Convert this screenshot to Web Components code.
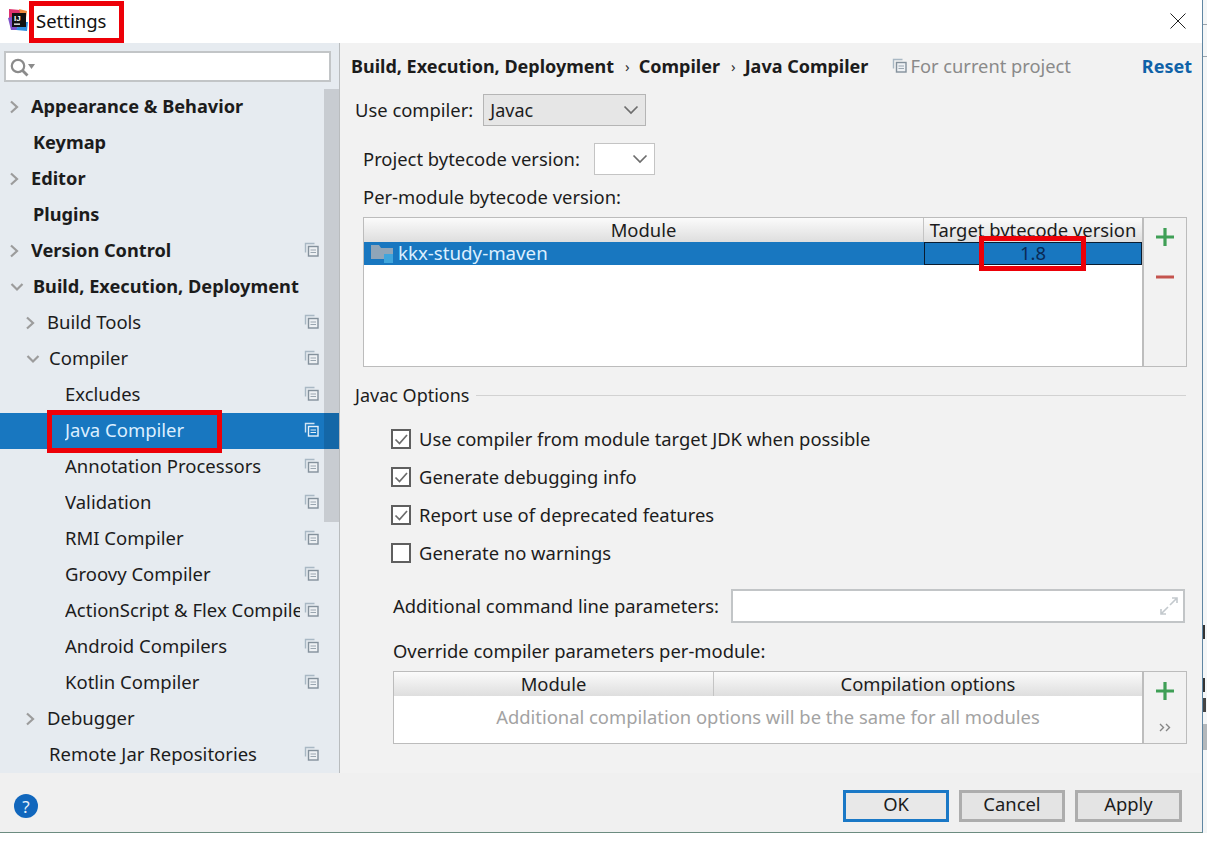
<!DOCTYPE html>
<html lang="en">
<head>
<meta charset="utf-8">
<title>Settings</title>
<style>
  html, body { margin: 0; padding: 0; background: #fff; }
  body { font-family: "Noto Sans", "Open Sans", sans-serif; color: #1c1c1c; }
</style>
</head>
<body>
<settings-page></settings-page>

<script>
  const COPY_ICON = `<svg width="15" height="15" viewBox="0 0 15 15" fill="none">
    <path d="M1.5 10.5v-9h9" stroke="var(--copy-back, #a9b8c4)" stroke-width="1.4"/>
    <rect x="4.5" y="4.5" width="9.5" height="9.5" stroke="var(--copy-front, #84919c)" stroke-width="1.4" fill="var(--copy-fill, #eef1f4)"/>
    <path d="M6.5 8h5.5M6.5 10.5h5.5" stroke="var(--copy-front, #9aa6b0)" stroke-width="1.2"/>
  </svg>`;

  function define(name, css, html, setup) {
    customElements.define(name, class extends HTMLElement {
      constructor() {
        super();
        const root = this.attachShadow({ mode: "open" });
        const content = typeof html === "function" ? html(this) : html;
        root.innerHTML = `<style>${css}</style>${content}`;
      }
      connectedCallback() {
        if (setup) setup(this, this.shadowRoot);
      }
    });
  }

  define("copy-icon", ":host{display:inline-flex;width:15px;height:15px}", COPY_ICON);

  define("tree-row", `
    :host {
      display: flex; align-items: center; height: 36px; box-sizing: border-box;
      padding-right: 20px; font-size: 18.5px; color: #1c1c1c; white-space: nowrap;
    }
    :host([bold]) { font-weight: 700; font-size: 18.2px; }
    :host([selected]) {
      background: #1877c0; color: #dcefff;
      --copy-back: #cfe3f2; --copy-front: #e6f1f9; --copy-fill: #1877c0;
    }
    .arrow { width: 24px; flex: none; display: flex; align-items: center; }
    .arrow svg { margin-left: 1px; }
    .label { flex: 1; min-width: 0; overflow: hidden; margin-top: -3px; }
    copy-icon { margin: -3px 0 0 4px; flex: none; }
  `, el => `
    ${el.hasAttribute("arrow") ? `<span class="arrow">${el.getAttribute("arrow") === "down"
      ? `<svg width="14" height="14" viewBox="0 0 14 14" fill="none"><path d="M1.5 4l5.5 5.5L12.5 4" stroke="#9c9c9c" stroke-width="2.2"/></svg>`
      : `<svg width="14" height="14" viewBox="0 0 14 14" fill="none"><path d="M3 1.5L9 7l-6 5.5" stroke="#9c9c9c" stroke-width="2.2"/></svg>`}</span>` : ""}
    <span class="label"><slot></slot></span>
    ${el.hasAttribute("copy") ? "<copy-icon></copy-icon>" : ""}
  `, el => {
    const x = +el.getAttribute("x");
    el.style.paddingLeft = (el.hasAttribute("arrow") ? x - 24 : x) + "px";
  });

  define("search-box", `
    :host {
      display: flex; align-items: center; box-sizing: border-box; height: 31px;
      margin: 8px 8px 7px 4px; background: #fff; border: 2px solid #c2c5c7; padding-left: 4px;
    }
  `, `<svg width="26" height="20" viewBox="0 0 26 20" fill="none">
    <circle cx="8" cy="9" r="6.2" stroke="#8b8b8b" stroke-width="2.2"/>
    <path d="M12.5 13.5l5 5" stroke="#8b8b8b" stroke-width="2.8"/>
    <path d="M18 7h7l-3.5 5z" fill="#8b8b8b"/>
  </svg>`);

  define("combo-box", `
    :host {
      display: inline-flex; align-items: center; justify-content: space-between; box-sizing: border-box;
      height: 32px; padding: 0 6px 0 6px; border: 1px solid #b5b5b5; background: #e6e6e6;
      font-size: 18px; color: #1c1c1c;
    }
    :host([plain]) { background: #fff; border-color: #c4c4c4; }
  `, `<span><slot></slot></span>
    <svg width="16" height="10" viewBox="0 0 16 10" fill="none"><path d="M1.5 1.5L8 8l6.5-6.5" stroke="#6d6d6d" stroke-width="1.7"/></svg>`);

  define("check-row", `
    :host { display: flex; align-items: center; height: 38px; padding-left: 51px; font-size: 18.4px; }
    .box {
      width: 20px; height: 20px; box-sizing: border-box; border: 2px solid #5f5f5f; background: #fff;
      margin-right: 8px; display: flex; align-items: center; justify-content: center;
    }
    span { margin-top: -2px; }
  `, el => `<div class="box">${el.hasAttribute("checked")
    ? `<svg width="14" height="14" viewBox="0 0 14 14" fill="none"><path d="M1.5 7.5l4 4L13 3" stroke="#6c6c6c" stroke-width="1.7"/></svg>` : ""}</div>
    <span><slot></slot></span>`);

  define("data-table", `
    :host { display: flex; box-sizing: border-box; border: 1px solid #bcbcbc; font-size: 18.4px; }
    .grid { flex: 1; min-width: 0; background: #fff; display: flex; flex-direction: column; }
    .head { display: flex; height: 24px; flex: none; background: linear-gradient(#fbfbfb, #dedede); }
    .head span {
      box-sizing: border-box; text-align: center; line-height: 24px; white-space: nowrap;
      overflow: hidden; border-left: 1px solid #c4c4c4;
    }
    .head span:first-child { border-left: 0; }
    .tools {
      width: 44px; flex: none; box-sizing: border-box; border-left: 2px solid #bdbdbd; background: #f2f2f2;
      display: flex; flex-direction: column; align-items: center;
    }
  `, el => {
    const cols = el.getAttribute("cols").split("|").map(c => c.split(":"));
    return `<div class="grid">
      <div class="head">${cols.map(c => `<span style="width:${c[1]}px">${c[0]}</span>`).join("")}</div>
      <slot></slot>
    </div>
    <div class="tools"><slot name="tools"></slot></div>`;
  });

  define("module-row", `
    :host {
      display: flex; height: 23px; background: #1877c0; color: #dcefff; font-size: 18.7px;
    }
    .name { width: 559px; flex: none; box-sizing: border-box; display: flex; align-items: center; padding-left: 6px; gap: 4px; }
    .name span { margin-top: -2px; }
    .cell {
      width: 218px; flex: none; box-sizing: border-box; border: 1px solid #0a1c30; margin-left: 1px;
      background: #1877c0; color: #0a2a55; text-align: center; line-height: 20px; font-size: 18.4px;
    }
  `, el => `<div class="name">
      <svg width="24" height="20" viewBox="0 0 24 20"><path d="M1 1h8l2 3h12v11H1z" fill="#8fa5b8"/><rect x="14" y="10" width="9" height="9" fill="#3fa5dc"/></svg>
      <span><slot></slot></span>
    </div>
    <div class="cell">${el.getAttribute("target")}</div>`);

  define("tool-plus", ":host{display:block}", `<svg width="20" height="20" viewBox="0 0 20 20"><path d="M10 1v18M1 10h18" stroke="#3f9f56" stroke-width="3.2"/></svg>`);
  define("tool-minus", ":host{display:block}", `<svg width="20" height="4" viewBox="0 0 20 4"><path d="M1 2h18" stroke="#c4544e" stroke-width="3"/></svg>`);
  define("tool-more", ":host{display:block}", `<svg width="12" height="9" viewBox="0 0 12 9" fill="none"><path d="M1 1l3.5 3.5L1 8M7 1l3.5 3.5L7 8" stroke="#868686" stroke-width="1.4"/></svg>`);

  define("dlg-button", `
    :host {
      display: inline-flex; align-items: center; justify-content: center; box-sizing: border-box;
      height: 32px; border: 3px solid #adadad; background: #e4e4e4; font-size: 18.4px; color: #1c1c1c;
      padding-bottom: 5px;
    }
    :host([primary]) { border-color: #1a78c6; background: #e8e8e8; }
  `, `<slot></slot>`);

  define("red-mark", `
    :host { position: absolute; box-sizing: border-box; border: 5px solid #ed0008; pointer-events: none; }
  `, "");

  define("title-bar", `
    :host { display: flex; align-items: center; height: 43px; background: #fff; padding-left: 8px; box-sizing: border-box; font-size: 18.5px; color: #111; }
    .name { margin-left: 7px; flex: 1; margin-top: -3px; }
    .close { margin-right: 16px; width: 16px; height: 16px; margin-top: -2px; }
  `, `<svg width="21" height="26" viewBox="0 0 21 26" style="margin-top:-1px">
      <path d="M1 1l11 1 2 6-9 7-4-5z" fill="#e0336e"/>
      <path d="M0 10l7-2 3 14-7 0z" fill="#7f52c8"/>
      <path d="M12 14l8 0-1 9-11-1z" fill="#2f8fe0"/>
      <path d="M11 1l8 2-1 7-5-1z" fill="#f08a3c"/>
      <rect x="4" y="5" width="14" height="14" fill="#111"/>
      <text x="6" y="13" font-family="Liberation Sans, sans-serif" font-size="8" font-weight="700" fill="#fff">IJ</text>
      <rect x="6" y="15.5" width="6" height="1.3" fill="#fff"/>
    </svg>
    <span class="name"><slot></slot></span>
    <svg class="close" viewBox="0 0 16 16" fill="none"><path d="M.5.5l15 15M15.5.5l-15 15" stroke="#222" stroke-width="1"/></svg>`);

  define("settings-sidebar", `
    :host { display: block; width: 339px; flex: none; background: #e6ebf0; position: relative; overflow: hidden; border-right: 1px solid #b9bcbe; box-sizing: content-box; }
    .thumb { position: absolute; left: 324px; top: 46px; width: 15px; height: 433px; background: rgba(0,0,0,.13); }
  `, `
    <search-box></search-box>
    <tree-row x="31" arrow="right" bold>Appearance &amp; Behavior</tree-row>
    <tree-row x="33" bold>Keymap</tree-row>
    <tree-row x="31" arrow="right" bold>Editor</tree-row>
    <tree-row x="33" bold>Plugins</tree-row>
    <tree-row x="31" arrow="right" bold copy>Version Control</tree-row>
    <tree-row x="33" arrow="down" bold>Build, Execution, Deployment</tree-row>
    <tree-row x="47" arrow="right" copy>Build Tools</tree-row>
    <tree-row x="49" arrow="down" copy>Compiler</tree-row>
    <tree-row x="65" copy>Excludes</tree-row>
    <tree-row x="65" copy selected>Java Compiler</tree-row>
    <tree-row x="65" copy>Annotation Processors</tree-row>
    <tree-row x="65" copy>Validation</tree-row>
    <tree-row x="65" copy>RMI Compiler</tree-row>
    <tree-row x="65" copy>Groovy Compiler</tree-row>
    <tree-row x="65" copy>ActionScript &amp; Flex Compiler</tree-row>
    <tree-row x="65" copy>Android Compilers</tree-row>
    <tree-row x="65" copy>Kotlin Compiler</tree-row>
    <tree-row x="47" arrow="right">Debugger</tree-row>
    <tree-row x="49" copy>Remote Jar Repositories</tree-row>
    <div class="thumb"></div>
  `);

  define("compiler-form", `
    :host { display: block; flex: 1; min-width: 0; background: #f2f2f2; font-size: 18.4px; white-space: nowrap; overflow: hidden; }
    .crumbs { display: flex; align-items: center; height: 45px; padding: 0 10px 0 11px; font-size: 18px; }
    .crumbs b { font-weight: 700; }
    .crumbs i { font-style: normal; margin: 0 9px 0 11px; font-size: 15px; color: #333; }
    .scope { display: flex; align-items: center; gap: 3px; margin-left: 24px; color: #8a8a8a; flex: 1; font-size: 18.3px; }
    .reset { color: #0f62a8; font-weight: 700; }
    .line { display: flex; align-items: center; }
    .line > span { margin-top: -2px; }
    .use { margin: 6px 0 0 15px; }
    .use combo-box { width: 163px; margin-left: 10px; }
    .bytecode { margin: 17px 0 0 23px; }
    .bytecode combo-box { width: 61px; margin-left: 14px; justify-content: flex-end; }
    .per { margin: 10px 0 0 23px; height: 24px; line-height: 24px; }
    .t1 { margin: 8px 15px 0 23px; height: 150px; }
    .javac { margin: 16px 16px 0 15px; height: 24px; font-size: 18px; }
    .javac::after { content: ""; flex: 1; height: 1px; background: #d2d2d2; margin-left: 7px; }
    .checks { margin-top: 13px; }
    .extra { margin: 17px 17px 0 53px; height: 34px; }
    .extra .input {
      flex: 1; height: 34px; box-sizing: border-box; margin-left: 12px; background: #fff; border: 2px solid #c2c5c7;
      display: flex; align-items: center; justify-content: flex-end; padding-right: 4px;
    }
    .over { margin: 16px 0 0 53px; height: 24px; line-height: 24px; }
    .t2 { margin: 8px 15px 0 53px; height: 73px; }
    .hint { text-align: center; color: #a3a3a3; line-height: 44px; margin-top: -1px; }
    tool-more { margin-top: auto; margin-bottom: 6px; }
    tool-plus { margin-top: 9px; }
    tool-minus { margin-top: 7px; }
  `, `
    <div class="crumbs">
      <b>Build, Execution, Deployment</b><i>&#8250;</i><b>Compiler</b><i>&#8250;</i><b>Java Compiler</b>
      <span class="scope"><copy-icon></copy-icon>For current project</span>
      <span class="reset">Reset</span>
    </div>
    <div class="line use"><span>Use compiler:</span><combo-box>Javac</combo-box></div>
    <div class="line bytecode"><span>Project bytecode version:</span><combo-box plain></combo-box></div>
    <div class="per">Per-module bytecode version:</div>
    <data-table class="t1" cols="Module:559|Target bytecode version:219">
      <module-row target="1.8">kkx-study-maven</module-row>
      <tool-plus slot="tools"></tool-plus>
      <tool-minus slot="tools"></tool-minus>
    </data-table>
    <div class="line javac">Javac Options</div>
    <div class="checks">
      <check-row checked>Use compiler from module target JDK when possible</check-row>
      <check-row checked>Generate debugging info</check-row>
      <check-row checked>Report use of deprecated features</check-row>
      <check-row>Generate no warnings</check-row>
    </div>
    <div class="line extra"><span>Additional command line parameters:</span>
      <div class="input"><svg width="20" height="20" viewBox="0 0 20 20" fill="none">
        <path d="M11 9l7-7M13 2h5v5" stroke="#c3c9cd" stroke-width="1.6"/>
        <path d="M9 11l-7 7M2 13v5h5" stroke="#c3c9cd" stroke-width="1.6"/>
      </svg></div>
    </div>
    <div class="over">Override compiler parameters per-module:</div>
    <data-table class="t2" cols="Module:319|Compilation options:429">
      <div class="hint">Additional compilation options will be the same for all modules</div>
      <tool-plus slot="tools"></tool-plus>
      <tool-more slot="tools"></tool-more>
    </data-table>
  `);

  define("dialog-footer", `
    :host { display: flex; align-items: center; height: 59px; background: #f0f0f0; box-sizing: border-box; padding: 7px 20px 0 14px; }
    .help {
      width: 24px; height: 24px; border-radius: 50%; background: #1167bd; color: #e8f2fb; font-size: 17px;
      display: flex; align-items: center; justify-content: center; margin-right: auto;
    }
    dlg-button { width: 106px; margin-left: 10px; }
    dlg-button:last-child { width: 107px; }
  `, `
    <div class="help">?</div>
    <dlg-button primary>OK</dlg-button>
    <dlg-button>Cancel</dlg-button>
    <dlg-button>Apply</dlg-button>
  `);

  define("settings-page", `
    :host { display: flex; width: 1207px; height: 841px; overflow: hidden; background: #fff; }
    .window {
      width: 1203px; height: 833px; flex: none; box-sizing: border-box; position: relative; display: flex; flex-direction: column;
      border-right: 1px solid #5f86a3; border-bottom: 1px solid #6c8c80; background: #f2f2f2;
    }
    .main { display: flex; height: 730px; flex: none; }
    .behind {
      flex: 1; height: 833px;
      background:
        linear-gradient(#333, #333) 0 625px / 2px 14px no-repeat,
        linear-gradient(#333, #333) 0 678px / 2px 14px no-repeat,
        linear-gradient(#444, #444) 0 698px / 3px 14px no-repeat,
        linear-gradient(#b4b8bb, #b4b8bb) 0 724px / 4px 26px no-repeat,
        linear-gradient(#9aa4ac, #9aa4ac) 0 24px / 4px 1px no-repeat,
        linear-gradient(#9aa4ac, #9aa4ac) 0 56px / 4px 1px no-repeat,
        #f4f6f7;
    }
  `, `
    <div class="window">
      <title-bar>Settings</title-bar>
      <div class="main">
        <settings-sidebar></settings-sidebar>
        <compiler-form></compiler-form>
      </div>
      <dialog-footer></dialog-footer>
      <red-mark style="left:29px;top:1px;width:95px;height:42px"></red-mark>
      <red-mark style="left:47px;top:410px;width:175px;height:43px"></red-mark>
      <red-mark style="left:979px;top:236px;width:107px;height:35px"></red-mark>
    </div>
    <div class="behind"></div>
  `);
</script>
</body>
</html>
